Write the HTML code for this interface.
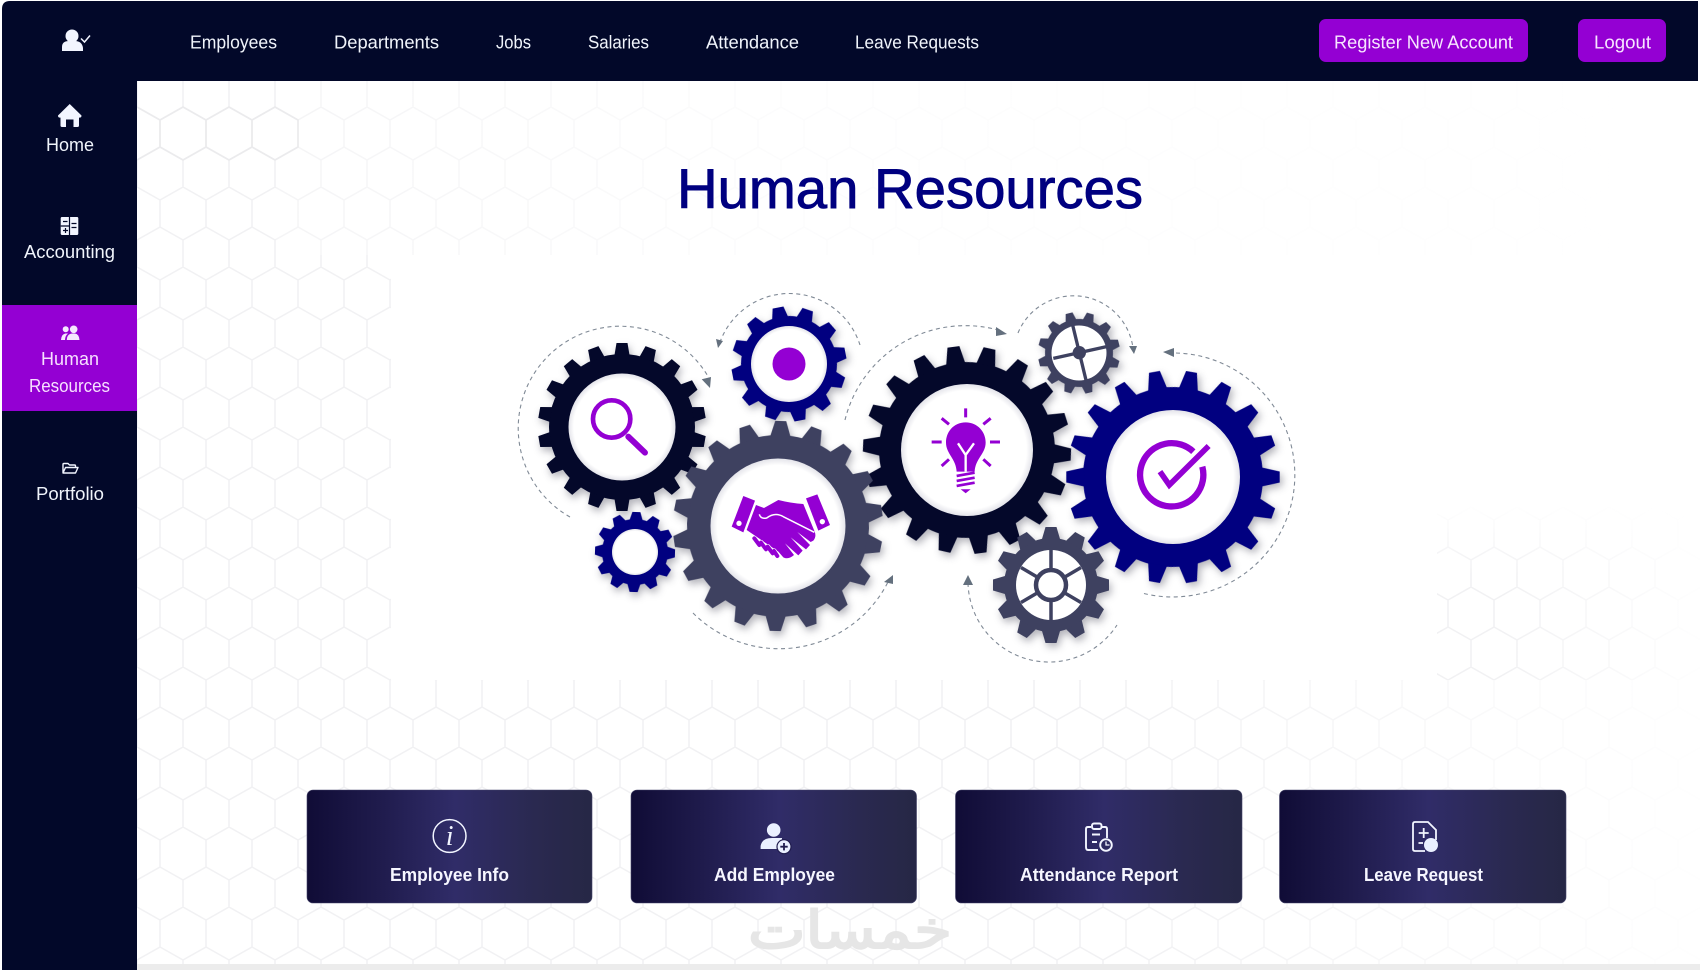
<!DOCTYPE html>
<html lang="en"><head><meta charset="utf-8"><title>Human Resources</title>
<style>
html,body{margin:0;padding:0;background:#fff;width:1700px;height:970px;overflow:hidden}
svg{display:block;font-family:"Liberation Sans",Arial,sans-serif}
.g{filter:drop-shadow(2px 4px 4px rgba(20,20,40,.32))}
.n{fill:#f0f4fb;font-size:18px}
.b{fill:#f6f6ff;font-size:18px;font-weight:700}
</style></head><body>
<svg width="1700" height="970" viewBox="0 0 1700 970" xmlns="http://www.w3.org/2000/svg">
<defs>
<pattern id="hex" width="46" height="80" patternUnits="userSpaceOnUse" patternTransform="translate(183 107)">
<path d="M0 0L23 13L46 0M23 13V40L0 53V80M23 40L46 53V80" fill="none" stroke="#f1f1f3" stroke-width="1.5"/>
</pattern>
<linearGradient id="btn" x1="0" x2="1" y1="0" y2="0">
<stop offset="0" stop-color="#100c36"/><stop offset=".25" stop-color="#1f1b4c"/><stop offset=".52" stop-color="#302c68"/><stop offset=".8" stop-color="#2a2950"/><stop offset="1" stop-color="#262745"/>
</linearGradient>
<linearGradient id="fr" x1="0" x2="1" y1="0" y2="0">
<stop offset="0" stop-color="#fff" stop-opacity="0"/><stop offset="1" stop-color="#fff" stop-opacity=".95"/>
</linearGradient>
<linearGradient id="fd" x1="0" x2="0" y1="0" y2="1">
<stop offset="0" stop-color="#fff" stop-opacity="1"/><stop offset="1" stop-color="#fff" stop-opacity="0"/>
</linearGradient>
<linearGradient id="ft" x1="0" x2="1" y1="0" y2="0">
<stop offset="0" stop-color="#fff" stop-opacity=".25"/><stop offset=".35" stop-color="#fff" stop-opacity=".8"/><stop offset="1" stop-color="#fff" stop-opacity="1"/>
</linearGradient>
<radialGradient id="wg"><stop offset=".9" stop-color="#fff"/><stop offset="1" stop-color="#e4e4ea"/></radialGradient>
</defs>

<rect width="1700" height="970" fill="#fff"/>
<rect x="137" y="81" width="1563" height="889" fill="url(#hex)"/>
<!-- hex masks -->
<rect x="276" y="81" width="1424" height="174" fill="url(#ft)"/>
<rect x="391" y="255" width="1046" height="425" fill="#fff"/>
<rect x="1437" y="255" width="263" height="250" fill="#fff"/>
<rect x="1437" y="505" width="263" height="70" fill="url(#fd)"/>
<rect x="1500" y="505" width="200" height="175" fill="url(#fr)"/>
<rect x="1100" y="680" width="600" height="290" fill="url(#fr)"/>
<path d="M137 107L160 120V147L137 160M160 120L183 107L206 120V147L183 160L160 147M206 120L229 107L252 120V147L229 160L206 147M252 120L275 107L298 120V147L275 160L252 147" fill="none" stroke="#ebebed" stroke-width="1.7"/>
<rect x="137" y="964" width="1563" height="6" fill="#ececec"/>

<!-- nav + sidebar -->
<path d="M2 970V9Q2 1 10 1H1698V81H137V970Z" fill="#020829"/>
<rect x="2" y="305" width="135" height="106" fill="#9400d3"/>

<!-- brand icon -->
<g fill="#f2f5ff"><circle cx="72" cy="36" r="6.5"/><path d="M62 51V47Q62 41 69 41H75Q82 41 83 48V51Z"/></g>
<path d="M81 38.5L84.5 42L90 35.5" fill="none" stroke="#f2f5ff" stroke-width="1.5"/>

<!-- nav text -->
<text class="n" x="190" y="48.5" textLength="87" lengthAdjust="spacingAndGlyphs">Employees</text>
<text class="n" x="334" y="48.5" textLength="105" lengthAdjust="spacingAndGlyphs">Departments</text>
<text class="n" x="496" y="48.5" textLength="35" lengthAdjust="spacingAndGlyphs">Jobs</text>
<text class="n" x="588" y="48.5" textLength="61" lengthAdjust="spacingAndGlyphs">Salaries</text>
<text class="n" x="706" y="48.5" textLength="93" lengthAdjust="spacingAndGlyphs">Attendance</text>
<text class="n" x="855" y="48.5" textLength="124" lengthAdjust="spacingAndGlyphs">Leave Requests</text>

<rect x="1319" y="19" width="209" height="43" rx="7" fill="#9400d3"/>
<text x="1334" y="48.5" font-size="18" fill="#f7e6ff" textLength="179" lengthAdjust="spacingAndGlyphs">Register New Account</text>
<rect x="1578" y="19" width="88" height="43" rx="7" fill="#9400d3"/>
<text x="1594" y="48.5" font-size="18" fill="#f7e6ff" textLength="57" lengthAdjust="spacingAndGlyphs">Logout</text>

<!-- sidebar -->
<path fill="#f2f5ff" d="M69.7 104L81.5 115.5Q81.5 118 79 117.6V125.5Q79 127 77.5 127H73.5V119.5H66V127H62Q60.5 127 60.5 125.5V117.6Q58 118 58 115.5Z"/>
<text class="n" x="46" y="151" textLength="48" lengthAdjust="spacingAndGlyphs">Home</text>

<rect x="60.7" y="217" width="17.6" height="18" rx="1.2" fill="#f2f5ff"/>
<path d="M69.5 217V235M60.7 226H69.5" stroke="#020829" stroke-width="1.2"/>
<path d="M63 221.5H67.5M71.5 223.5H76.5M71.5 227.5H76.5M63 230.5H68M65.5 228V233" stroke="#020829" stroke-width="1.2" fill="none"/>
<text class="n" x="24" y="258" textLength="91" lengthAdjust="spacingAndGlyphs">Accounting</text>

<g fill="#f5e8ff"><circle cx="65.7" cy="329.3" r="3"/><circle cx="73.7" cy="329.3" r="3.8"/>
<path d="M61 340Q61.5 334 65.5 333.5H68Q65 336 65 340ZM66.8 340Q67 334 72 333.5H75Q79 334 79.5 340Z"/></g>
<text x="41" y="365" font-size="18" fill="#f7e0ff" textLength="58" lengthAdjust="spacingAndGlyphs">Human</text>
<text x="29" y="392" font-size="18" fill="#f7e0ff" textLength="81" lengthAdjust="spacingAndGlyphs">Resources</text>

<path d="M63 473V464.5Q63 463.5 64 463.5H68L69.5 465H74.5Q75.5 465 75.5 466V467.5M63 473L65.5 467.5H78L75.5 473Z" fill="none" stroke="#f2f5ff" stroke-width="1.4" stroke-linejoin="round"/>
<text class="n" x="36" y="500" textLength="68" lengthAdjust="spacingAndGlyphs">Portfolio</text>

<!-- title -->
<text x="677" y="208" font-size="56" fill="#000080" stroke="#000080" stroke-width=".9" textLength="466" lengthAdjust="spacingAndGlyphs">Human Resources</text>

<!-- dashed arcs -->
<g fill="none" stroke="#808a96" stroke-width="1.1" stroke-dasharray="4 3.5">
<path d="M570 517A102 102 0 1 1 709 378"/>
<path d="M860 345A74 74 0 0 0 719 345"/>
<path d="M693 613A122 122 0 0 0 888 582"/>
<path d="M845 420A124 124 0 0 1 998 330"/>
<path d="M1018 333A60 60 0 0 1 1133 348"/>
<path d="M1176 353A122 122 0 1 1 1142 593"/>
<path d="M968 583A81 81 0 0 0 1117 625"/>
</g>
<g fill="#64707e">
<polygon points="701.7,379.3 711,377 710,388"/>
<polygon points="716,339 723,341 718,348"/>
<polygon points="884,582 893,575 893,584"/>
<polygon points="996,327 1007,334 996,336"/>
<polygon points="1129,346 1137,346 1134,354"/>
<polygon points="1174,348 1163,352 1174,357"/>
<polygon points="968,575 963,585 973,585"/>
</g>

<!-- gear A -->
<g class="g" transform="translate(622 427)" fill="#04082a">
<circle r="73"/>
<g id="a3"><path id="a" d="M-7.5-72L-5.5-84H5.5L7.5-72Z"/><use href="#a" transform="rotate(20)"/><use href="#a" transform="rotate(40)"/></g>
<use href="#a3" transform="rotate(60)"/><use href="#a3" transform="rotate(120)"/><use href="#a3" transform="rotate(180)"/><use href="#a3" transform="rotate(240)"/><use href="#a3" transform="rotate(300)"/>
</g>
<circle cx="622" cy="427" r="53.5" fill="url(#wg)"/>
<!-- gear B -->
<g class="g" transform="translate(789 364) rotate(-11)" fill="#010080">
<circle r="48"/>
<g id="b3"><path id="b" d="M-8-47L-5.5-57.5H5.5L8-47Z"/><use href="#b" transform="rotate(30)"/><use href="#b" transform="rotate(60)"/></g>
<use href="#b3" transform="rotate(90)"/><use href="#b3" transform="rotate(180)"/><use href="#b3" transform="rotate(270)"/>
</g>
<circle cx="789" cy="364" r="38" fill="url(#wg)"/>
<circle cx="789" cy="364" r="16.5" fill="#9400d3"/>
<!-- gear D -->
<g class="g" transform="translate(635 552) rotate(2)" fill="#010080">
<circle r="33"/>
<g id="d3"><path id="d" d="M-6.5-32L-4-40H4L6.5-32Z"/><use href="#d" transform="rotate(30)"/><use href="#d" transform="rotate(60)"/></g>
<use href="#d3" transform="rotate(90)"/><use href="#d3" transform="rotate(180)"/><use href="#d3" transform="rotate(270)"/>
</g>
<circle cx="635" cy="552" r="23" fill="url(#wg)"/>
<!-- gear E -->
<g class="g" transform="translate(967 450) rotate(-7.5)" fill="#04082a">
<circle r="88"/>
<g id="e3"><path id="e" d="M-9.5-87L-6-104H6L9.5-87Z"/><use href="#e" transform="rotate(20)"/><use href="#e" transform="rotate(40)"/></g>
<use href="#e3" transform="rotate(60)"/><use href="#e3" transform="rotate(120)"/><use href="#e3" transform="rotate(180)"/><use href="#e3" transform="rotate(240)"/><use href="#e3" transform="rotate(300)"/>
</g>
<circle cx="967" cy="450" r="66" fill="url(#wg)"/>
<!-- gear C -->
<g class="g" transform="translate(778 526) rotate(1.5)" fill="#3e4160">
<circle r="91"/>
<g id="c3"><path id="c" d="M-10-90L-5.5-105H5.5L10-90Z"/><use href="#c" transform="rotate(20)"/><use href="#c" transform="rotate(40)"/></g>
<use href="#c3" transform="rotate(60)"/><use href="#c3" transform="rotate(120)"/><use href="#c3" transform="rotate(180)"/><use href="#c3" transform="rotate(240)"/><use href="#c3" transform="rotate(300)"/>
</g>
<circle cx="778" cy="526" r="67.5" fill="url(#wg)"/>
<!-- gear G -->
<g class="g" transform="translate(1079 353) rotate(-14)" fill="#3e4160">
<circle r="34"/>
<g id="g3"><path id="gg" d="M-5.5-33L-3.5-41H3.5L5.5-33Z"/><use href="#gg" transform="rotate(30)"/><use href="#gg" transform="rotate(60)"/></g>
<use href="#g3" transform="rotate(90)"/><use href="#g3" transform="rotate(180)"/><use href="#g3" transform="rotate(270)"/>
</g>
<circle cx="1079" cy="353" r="27.5" fill="#fff"/>
<g stroke="#3e4160" transform="translate(850 270) scale(.3333)">
<path d="M610 265L770 230M668 165L708 330" stroke-width="10"/>
<circle cx="688" cy="248" r="20" fill="#3e4160" stroke="none"/>
</g>
<!-- gear F -->
<g class="g" transform="translate(1173 477) rotate(-10)" fill="#010080">
<circle r="90"/>
<g id="f3"><path id="f" d="M-9.5-89L-5.5-106.7H5.5L9.5-89Z"/><use href="#f" transform="rotate(20)"/><use href="#f" transform="rotate(40)"/></g>
<use href="#f3" transform="rotate(60)"/><use href="#f3" transform="rotate(120)"/><use href="#f3" transform="rotate(180)"/><use href="#f3" transform="rotate(240)"/><use href="#f3" transform="rotate(300)"/>
</g>
<circle cx="1173" cy="477" r="67" fill="url(#wg)"/>
<!-- gear H -->
<g class="g" transform="translate(1051 585)" fill="#3e4160">
<circle r="47"/>
<g id="h3"><path id="h" d="M-9-46L-5.5-58H5.5L9-46Z"/><use href="#h" transform="rotate(30)"/><use href="#h" transform="rotate(60)"/></g>
<use href="#h3" transform="rotate(90)"/><use href="#h3" transform="rotate(180)"/><use href="#h3" transform="rotate(270)"/>
</g>
<circle cx="1051" cy="585" r="35" fill="#fff"/>
<g transform="translate(1051 585)" stroke="#3e4160" fill="none">
<circle r="15" stroke-width="4.5"/>
<path d="M0-35V-15M0 15V35M-30-17.5L-13-7.5M30-17.5L13-7.5M-30 17.5L-13 7.5M30 17.5L13 7.5" stroke-width="3.5"/>
</g>

<!-- magnifier -->
<g transform="translate(500 270) scale(.3333)" fill="none" stroke="#9400d3" stroke-linecap="round">
<circle cx="335" cy="447" r="56" stroke-width="14"/>
<path d="M385 500L435 548" stroke-width="18"/>
</g>
<!-- handshake -->
<g transform="translate(720 480) scale(.3333)">
<polygon points="70,48 105,62 70,157 35,140" fill="#9400d3"/>
<polygon points="258,55 292,43 330,135 295,152" fill="#9400d3"/>
<circle cx="57" cy="130" r="8" fill="#fff"/><circle cx="307" cy="125" r="8" fill="#fff"/>
<path fill="#9400d3" d="M108 75L132 84L175 60Q215 70 250 72L284 155Q290 170 280 182L272 186L232 156L270 195L258 208L212 172L248 212L235 226L195 190L222 225Q205 240 190 232L175 215L80 150Z"/>
<path d="M118 103Q122 118 140 114Q165 95 190 110L283 157" fill="none" stroke="#fff" stroke-width="4.5"/>
<path d="M103 175L118 195M123 188L138 208M143 200L158 220M162 213L172 228" stroke="#fff" stroke-width="16" stroke-linecap="round"/>
<path d="M103 175L118 195M123 188L138 208M143 200L158 220M162 213L172 228" stroke="#9400d3" stroke-width="12" stroke-linecap="round"/>
</g>
<!-- bulb -->
<g transform="translate(850 270) scale(.3333)">
<path fill="#9400d3" d="M347 457C310 457 288 487 288 517C288 552 318 565 320 605H374C376 565 407 552 407 517C407 487 384 457 347 457Z"/>
<path d="M324 520L347 555L372 520M347 555V605" fill="none" stroke="#fff" stroke-width="7"/>
<path d="M320 618L374 608M320 633L374 623M320 648L374 638" stroke="#9400d3" stroke-width="8"/>
<path d="M332 658H362L347 670Z" fill="#9400d3"/>
<path d="M347 415V442M275 445L297 463M422 445L400 463M245 516H275M420 516H450M275 588L297 568M422 588L400 568" stroke="#9400d3" stroke-width="9"/>
</g>
<!-- check -->
<g transform="translate(850 270) scale(.3333)" fill="none">
<path d="M1030 545A95 95 0 1 0 1057 590" stroke="#9400d3" stroke-width="19"/>
<path d="M930 605L958 645L1076 528" stroke="#9400d3" stroke-width="17"/>
</g>

<!-- watermark -->
<text x="748" y="948" font-family="DejaVu Sans,sans-serif" font-size="52" fill="#e6e6e6" stroke="#e6e6e6" stroke-width="2" textLength="204" lengthAdjust="spacingAndGlyphs">خمسات</text>

<!-- buttons -->
<g stroke="#45446a" stroke-width=".6">
<rect x="307" y="790" width="285" height="113" rx="6" fill="url(#btn)"/>
<rect x="631" y="790" width="285.5" height="113" rx="6" fill="url(#btn)"/>
<rect x="955.5" y="790" width="286.5" height="113" rx="6" fill="url(#btn)"/>
<rect x="1279.5" y="790" width="286.5" height="113" rx="6" fill="url(#btn)"/>
</g>
<text class="b" x="390" y="881" textLength="119" lengthAdjust="spacingAndGlyphs">Employee Info</text>
<text class="b" x="714" y="881" textLength="121" lengthAdjust="spacingAndGlyphs">Add Employee</text>
<text class="b" x="1020" y="881" textLength="158" lengthAdjust="spacingAndGlyphs">Attendance Report</text>
<text class="b" x="1364" y="881" textLength="119" lengthAdjust="spacingAndGlyphs">Leave Request</text>

<!-- info -->
<circle cx="449.6" cy="836" r="16.4" fill="none" stroke="#f2f5ff" stroke-width="1.5"/>
<text x="449.6" y="845" font-family="Liberation Serif" font-style="italic" font-size="28" fill="#f2f5ff" text-anchor="middle">i</text>
<!-- add employee -->
<circle cx="773.7" cy="830" r="6.8" fill="#eaf0ff"/>
<path d="M760.6 849V846Q762 838 772 838H782V849Z" fill="#eaf0ff"/>
<circle cx="784" cy="846.7" r="7" fill="#eaf0ff" stroke="#201c4e" stroke-width="1.2"/>
<path d="M784 843V850.4M780.3 846.7H787.7" stroke="#201c4e" stroke-width="1.8"/>
<!-- clipboard -->
<path d="M1091 827H1088Q1086 827 1086 829V847Q1086 850 1088 850H1098M1102 827H1105Q1107 827 1107 829V838" fill="none" stroke="#f2f5ff" stroke-width="1.9"/>
<rect x="1092" y="823.5" width="9.5" height="5.5" rx="2" fill="none" stroke="#f2f5ff" stroke-width="1.9"/>
<path d="M1092 834.5H1100M1092 842H1097" stroke="#f2f5ff" stroke-width="1.9"/>
<circle cx="1106" cy="845" r="5.8" fill="#2d2a60" stroke="#f2f5ff" stroke-width="1.9"/>
<path d="M1106 841.5V845H1109.5" fill="none" stroke="#f2f5ff" stroke-width="1.3"/>
<!-- doc -->
<path d="M1425 851H1415Q1413 851 1413 849V824Q1413 822 1415 822H1428L1436 830V840" fill="none" stroke="#f2f5ff" stroke-width="1.8"/>
<path d="M1423.7 828V838M1418.7 833H1428.7M1418.5 843H1423" stroke="#f2f5ff" stroke-width="1.8"/>
<circle cx="1431" cy="845" r="7" fill="#eaf0ff"/>
</svg>
</body></html>
